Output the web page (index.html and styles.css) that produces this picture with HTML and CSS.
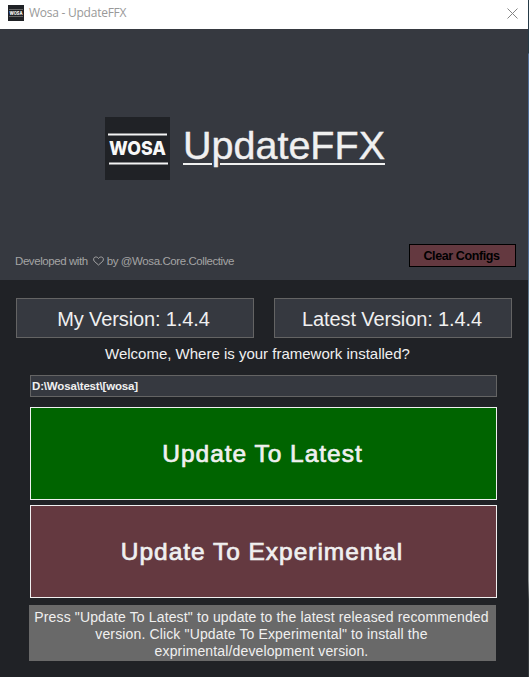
FILE: index.html
```html
<!DOCTYPE html>
<html lang="en">
<head>
<meta charset="utf-8">
<title>Wosa - UpdateFFX</title>
<link rel="stylesheet" href="styles.css">
</head>
<body>
<div class="window">
  <header class="titlebar">
    <svg class="app-icon" viewBox="0 0 16 16"><rect width="16" height="16" fill="#202226"/><path d="M1 4.5H15M1 11.5H15" stroke="#666"/><text x="1.5" y="10" class="mark" font-size="5" textLength="13" lengthAdjust="spacingAndGlyphs">WOSA</text></svg>
    <span class="caption">Wosa - UpdateFFX</span>
    <svg class="close" viewBox="0 0 11 11"><path d="M.5 .5L10.5 10.5M10.5 .5L.5 10.5" stroke="#858585" fill="none"/></svg>
  </header>
  <section class="hero">
    <div class="brand">
      <svg class="logo" viewBox="0 0 65 63"><rect width="65" height="63" fill="#202226"/><path d="M3 17.5H62M4 46.5H63" stroke="#f4f4f4" stroke-width="1.8"/><text x="4" y="38" class="mark" font-size="19" textLength="57" lengthAdjust="spacingAndGlyphs">WOSA</text></svg>
      <h1>UpdateFFX</h1>
    </div>
    <div class="hero-foot">
      <p class="credit"><span>Developed with</span><svg class="heart" viewBox="0 0 11 10"><path d="M5.5 9L1.2 5.2C.1 3.7.5 1.2 2.6 1C4 .9 5 1.6 5.5 2.5C6 1.6 7 .9 8.4 1C10.5 1.2 10.9 3.7 9.8 5.2Z" fill="none" stroke="#a4a4a4"/></svg><span class="by">by @Wosa.Core.Collective</span></p>
      <button class="clear">Clear Configs</button>
    </div>
  </section>
  <main>
    <div class="versions"><div>My Version: 1.4.4</div><div>Latest Version: 1.4.4</div></div>
    <p class="welcome">Welcome, Where is your framework installed?</p>
    <div class="path">D:\Wosa\test\[wosa]</div>
    <button class="action latest"><span>Update To Latest</span></button>
    <button class="action experimental"><span>Update To Experimental</span></button>
    <p class="help">Press "Update To Latest" to update to the latest released recommended<br>version. Click "Update To Experimental" to install the<br>exprimental/development version.</p>
  </main>
</div>
<div class="edge"></div>
</body>
</html>
```

FILE: styles.css
```css
* { box-sizing: border-box; }
body { margin: 0; width: 529px; height: 677px; overflow: hidden; display: flex; font-family: "Liberation Sans", sans-serif; color: #f0f0f0; background: #202226; }
p, h1 { margin: 0; }
button { font-family: inherit; padding: 0; border-radius: 0; }
.window { width: 528px; height: 677px; }
.edge { width: 1px; height: 677px; background: linear-gradient(#263b48 0 53px, #506f98 54px 250px, #60798b 300px 430px, #8a9091 500px 580px, #34393c 600px); }
.titlebar { height: 29px; display: flex; align-items: center; background: #fff; padding: 0 10px 3px 8px; }
.app-icon { width: 16px; height: 16px; }
.mark { font-family: Inter, "Liberation Sans", sans-serif; font-weight: 800; fill: #f8f8f8; }
.caption { margin-left: 5px; flex: 1; font: 12px/18px "Open Sans", sans-serif; letter-spacing: -.25px; color: #999; }
.close { width: 11px; height: 11px; }
.hero { height: 251px; background: #363940; display: flex; flex-direction: column; justify-content: space-between; padding: 88px 12px 13px 15px; }
.brand { display: flex; padding-left: 90px; }
.logo { width: 65px; height: 63px; }
h1 { margin-left: 13px; padding-top: 5px; height: 43px; line-height: 46px; font-size: 39.5px; font-weight: 400; -webkit-text-stroke: .4px #f0f0f0; }
h1 { text-decoration: underline; text-decoration-thickness: 2px; text-underline-offset: 4px; }
.hero-foot { display: flex; justify-content: space-between; }
.credit { display: flex; align-items: center; height: 23px; padding-top: 11px; font-size: 11.5px; letter-spacing: -.42px; color: #a4a4a4; }
.heart { width: 11px; height: 10px; margin: 0 3px 0 5px; }
.clear { width: 107px; height: 23px; border: 1px solid #000; background: #643940; color: #000; font-size: 12.5px; letter-spacing: -.4px; padding-right: 2px; font-weight: 700; }
main { height: 397px; padding: 18px 16px 0; background: #202226; }
.versions { display: grid; grid-template-columns: 238px 238px; gap: 20px; }
.versions div { height: 40px; line-height: 41px; border: 1px solid #646464; background: #363940; padding-right: 3px; text-align: center; font-size: 20px; letter-spacing: -.12px; }
.versions div:last-child { padding-right: 2px; }
.welcome { margin-top: 6px; height: 20px; line-height: 20px; font-size: 15px; padding-left: 89px; white-space: nowrap; }
.path { margin: 11px 15px 0 14px; height: 22px; line-height: 20px; padding-left: 1px; border: 1px solid #646464; background: #363940; font-size: 11.5px; letter-spacing: -.16px; font-weight: 700; }
.action { display: block; width: 467px; height: 93px; margin-left: 14px; padding-right: 2px; border: 1px solid #f0f0f0; color: #f0f0f0; font-size: 24.5px; letter-spacing: .97px; -webkit-text-stroke: .7px #f0f0f0; }
.latest { margin-top: 10px; background: #006400; }
.experimental { margin-top: 5px; padding-right: 3px; background: #643940; }
.help { margin: 7px 0 0 13px; width: 467px; height: 56px; padding: 4px 2px 0 0; background: #696969; text-align: center; font-size: 14px; letter-spacing: .14px; line-height: 17px; white-space: nowrap; }
```
